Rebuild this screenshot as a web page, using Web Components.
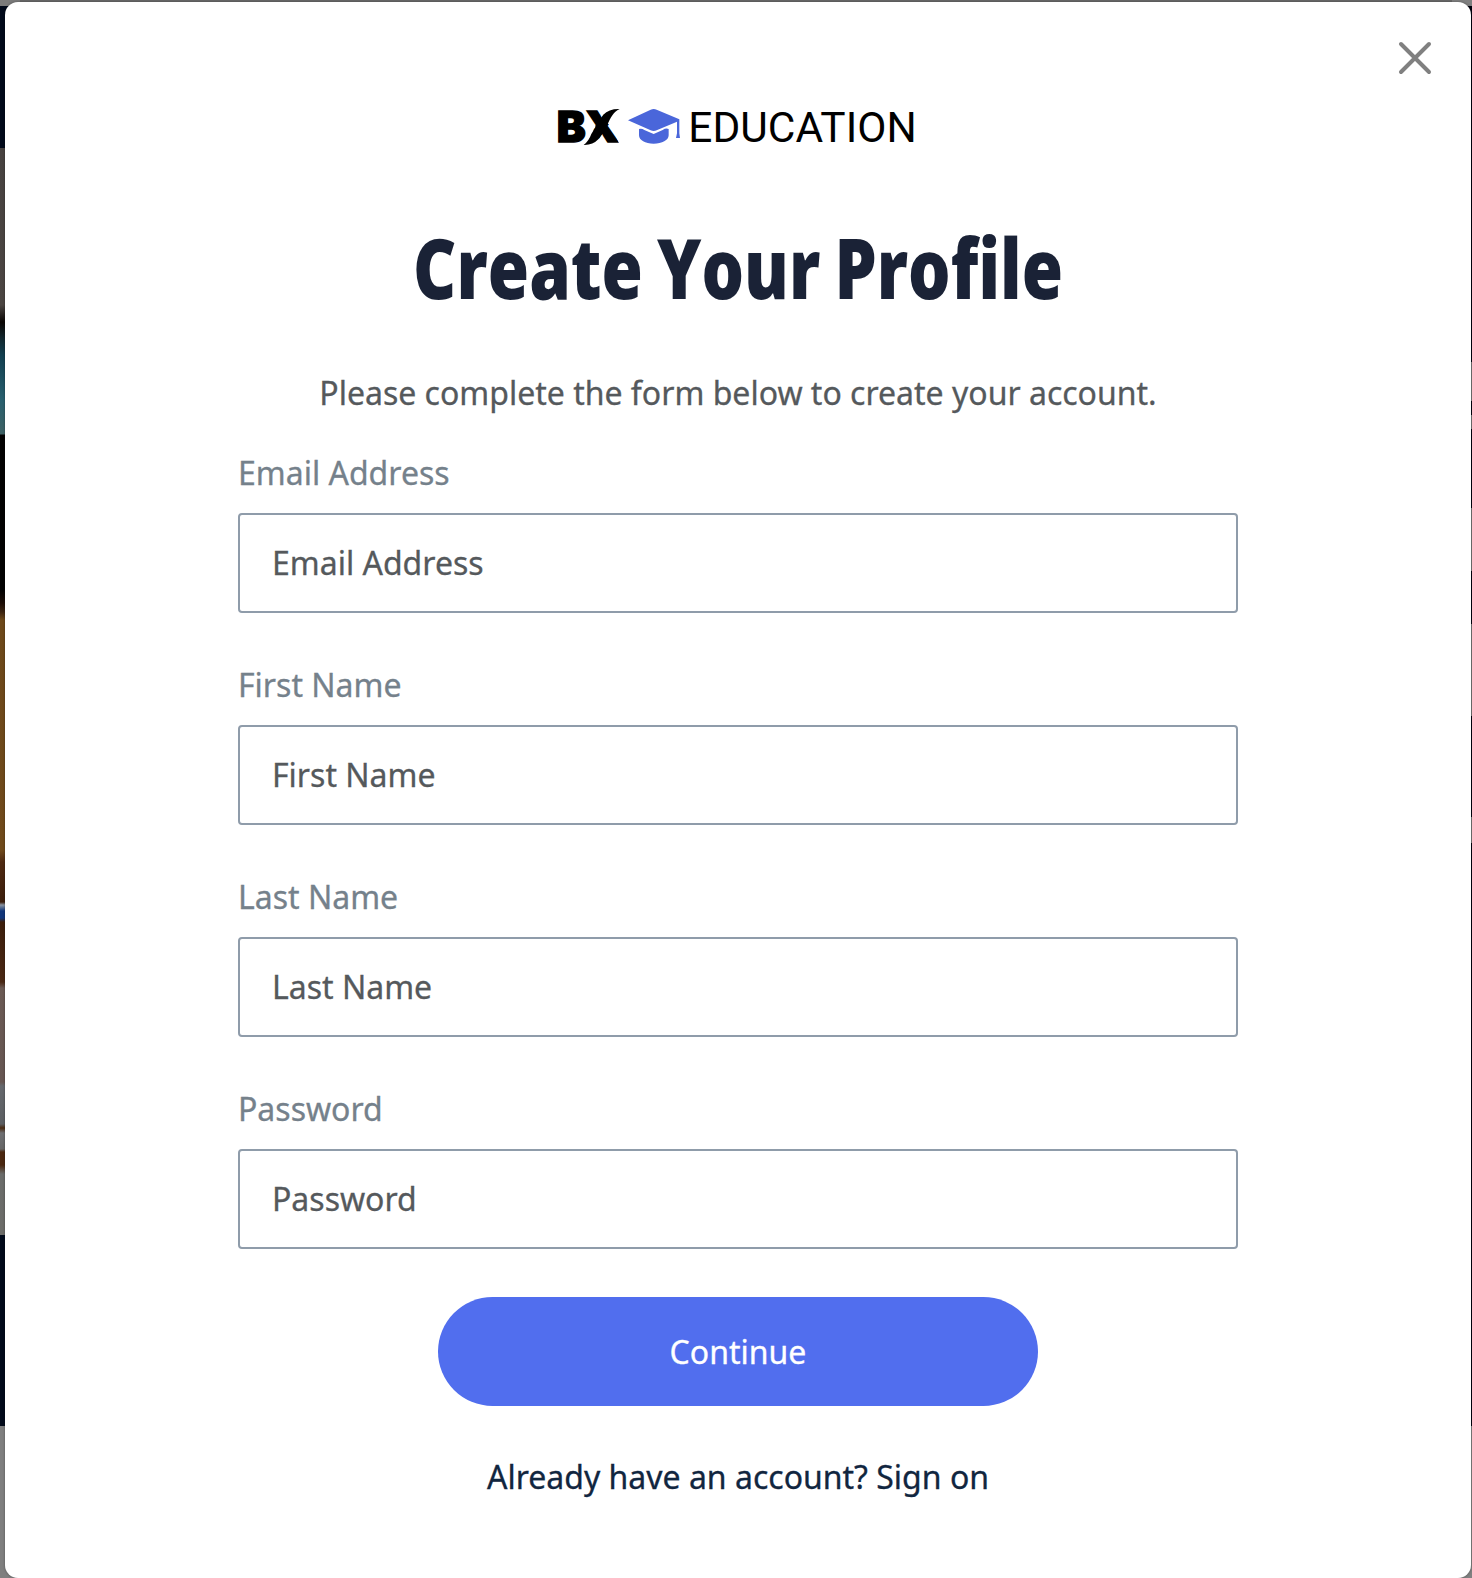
<!DOCTYPE html>
<html lang="en">
<head>
<meta charset="utf-8">
<title>Create Your Profile</title>
<style>
html,body{margin:0;height:100%}
body{font-family:"Noto Sans","Open Sans",sans-serif;font-size:32px;overflow:hidden;-webkit-text-stroke:.3px currentColor}
</style>
</head>
<body>
<bx-backdrop>
  <bx-modal>
    <bx-close slot="close"></bx-close>
    <bx-logo></bx-logo>
    <bx-title></bx-title>
    <bx-intro>Please complete the form below to create your account.</bx-intro>
    <bx-field label="Email Address"></bx-field>
    <bx-field label="First Name"></bx-field>
    <bx-field label="Last Name"></bx-field>
    <bx-field label="Password"></bx-field>
    <bx-button>Continue</bx-button>
    <bx-signin>Already have an account? Sign on</bx-signin>
  </bx-modal>
</bx-backdrop>
<script>
const define = (name, html) => customElements.define(name, class extends HTMLElement {
  constructor() {
    super();
    this.attachShadow({ mode: 'open' }).innerHTML = html;
  }
});

define('bx-backdrop', `<style>
:host{display:flex;box-sizing:border-box;width:1472px;height:1578px;padding:2px 1px 0 5px;
background:
linear-gradient(#7b7b7b 6px,#020a1b 6px 148px,#474240 148px,#4b4542 305px,#0a0604 322px,#12272e 338px,#123f50 355px,#28606f 400px,#3f6164 434px,#030202 435px,#020202 590px,#1c0d06 603px,#3c2411 612px,#6d481a 620px,#704a1b 850px,#4f2a12 862px,#3c1e0c 902px,#8a94a0 905px,#11367a 911px,#11367a 918px,#3c1e0c 922px,#4a2814 982px,#6b5a54 988px,#665652 1082px,#65686d 1086px,#5c5f62 1124px,#4a2b12 1128px,#6f7073 1133px,#666 1149px,#4b2710 1152px,#4a2710 1165px,#6b6c6a 1174px,#6c6c69 1235px,#020a1b 1235px 1426px,#7f7f7f 1426px) 0 0/20px 100% no-repeat,
linear-gradient(#808080 6px,#00020e 6px 362px,#747474 362px 401px,#00020e 401px 415px,#747474 415px 429px,#00020e 429px 508px,#747474 508px 571px,#00020e 571px 624px,#747474 624px 716px,#00020e 716px 817px,#747474 817px 843px,#00020e 843px 1426px,#808080 1426px) 100% 0/20px 100% no-repeat,
#696969}
</style><slot></slot>`);

define('bx-modal', `<style>
:host{display:flex;flex-direction:column;align-items:center;position:relative;flex:1;background:#fff;border-radius:13px;box-shadow:0 0 2px 1px rgba(0,0,0,.16)}
.close{position:absolute;right:38px;top:38px;display:flex}
</style><slot></slot><div class="close"><slot name="close"></slot></div>`);

define('bx-close', `<style>:host{display:block}svg{display:block}</style>
<svg width="36" height="36" viewBox="0 0 36 36" fill="none" stroke="#808080" stroke-width="4" stroke-linecap="round"><path d="M4 4l28 28M32 4L4 32"/></svg>`);

define('bx-logo', `<style>:host{display:block;margin-top:88px;height:70px;-webkit-text-stroke:0}svg{display:block}.bx{stroke:#000;stroke-width:4;-webkit-text-stroke:4px #000}</style>
<svg width="396" height="70" viewBox="0 0 1188 210">
<clipPath id="arm"><path d="M130 50H187L197 95 215 110 242 170H184L170 125 130 108Z"/></clipPath>
<text class="bx" x="50" y="157" font-family="Inter" font-weight="900" font-size="127" textLength="87" lengthAdjust="spacingAndGlyphs">B</text>
<g clip-path="url(#arm)"><text class="bx" x="134" y="157" font-family="Inter" font-weight="900" font-size="127" textLength="103" lengthAdjust="spacingAndGlyphs">X</text></g>
<path d="M239 57Q207 56 190 74L165 109 188 128L202 104C212 84 219 66 239 57ZM131 165Q158 166 175 148L196 120 172 102 154 132Q146 154 131 165Z"/>
<path fill="#4a66da" d="M264 91L332 59Q341 55 350 59L418 88V130L420 144H408L411 130V95L350 121Q341 125 332 121ZM297 117Q305 114 313 120L341 132 368 120Q378 113 386 117V136C386 151 366 161 341 161S297 151 297 136Z"/>
<text x="445" y="156" font-family="Roboto" font-size="128" textLength="685" lengthAdjust="spacingAndGlyphs">EDUCATION</text>
</svg>`);

define('bx-title', `<style>:host{display:block;margin-top:40px;height:130px;-webkit-text-stroke:.9px #1a2236}svg{display:block;overflow:visible}text{word-spacing:-4px}</style>
<svg width="660" height="130" viewBox="0 0 660 130" role="heading">
<text x="5" y="98.5" font-family="Open Sans,Noto Sans" font-weight="800" font-size="82.5" fill="#1a2236" textLength="650" lengthAdjust="spacingAndGlyphs">Create Your Profile</text>
</svg>`);

define('bx-intro', `<style>:host{display:block;margin-top:41px;line-height:44px;height:44px;color:#55595c;white-space:nowrap}</style><slot></slot>`);

customElements.define('bx-field', class extends HTMLElement {
  connectedCallback() {
    const label = this.getAttribute('label');
    this.attachShadow({ mode: 'open' }).innerHTML = `<style>
:host{display:flex;flex-direction:column;width:1000px;height:212px}
label{line-height:44px;padding-top:36px;height:44px;color:#75818b}
.box{box-sizing:border-box;height:100px;margin-top:18px;border:2px solid #8f9caa;border-radius:4px;padding:0 32px;display:flex;align-items:center;color:#55595c;line-height:44px}
</style><label>${label}</label><div class="box"><span>${label}</span></div>`;
  }
});

define('bx-button', `<style>
:host{display:flex;align-items:center;justify-content:center;width:600px;height:109px;margin-top:34px;background:#516eee;color:#fff;border-radius:55px}
</style><slot></slot>`);

define('bx-signin', `<style>:host{display:block;margin-top:49px;line-height:44px;color:#11263f;white-space:nowrap}</style><slot></slot>`);
</script>
</body>
</html>
